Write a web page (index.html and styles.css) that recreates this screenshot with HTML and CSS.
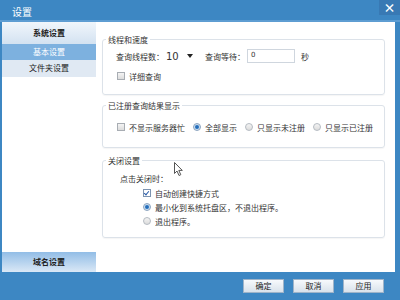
FILE: index.html
```html
<!DOCTYPE html>
<html lang="zh">
<head>
    <meta charset="UTF-8">
    <title>设置</title>
    <link rel="stylesheet" href="styles.css">
</head>
<body>
    <div class="window">
        <div class="titlebar">
            <span class="title">设置</span>
            <span class="close">×</span>
        </div>

        <div class="main">
            <div class="sidebar">
                <div class="side-head">系统设置</div>
                <div class="side-item active">基本设置</div>
                <div class="side-item">文件夹设置</div>
                <div class="side-space"></div>
                <div class="side-foot">域名设置</div>
            </div>

            <div class="content">
                <fieldset class="group group-speed">
                    <legend>线程和速度</legend>
                    <div class="group-body">
                        <div class="row">
                            <span>查询线程数：</span>
                            <span class="select">10<span class="arrow"></span></span>
                            <span class="label-wait">查询等待：</span>
                            <span class="input">0</span>
                            <span class="unit">秒</span>
                        </div>
                        <div class="row row-gap">
                            <span class="check"></span>详细查询
                        </div>
                    </div>
                </fieldset>

                <fieldset class="group group-show">
                    <legend>已注册查询结果显示</legend>
                    <div class="group-body">
                        <div class="row">
                            <span class="opt"><span class="check"></span>不显示服务器忙</span>
                            <span class="opt"><span class="radio on"></span>全部显示</span>
                            <span class="opt"><span class="radio"></span>只显示未注册</span>
                            <span class="opt"><span class="radio"></span>只显示已注册</span>
                        </div>
                    </div>
                </fieldset>

                <fieldset class="group group-close">
                    <legend>关闭设置</legend>
                    <div class="group-body">
                        <div class="row">点击关闭时：</div>
                        <div class="row sub"><span class="check on"></span>自动创建快捷方式</div>
                        <div class="row sub"><span class="radio on"></span>最小化到系统托盘区，不退出程序。</div>
                        <div class="row sub"><span class="radio"></span>退出程序。</div>
                    </div>
                </fieldset>

                <svg class="cursor" width="10" height="15" viewBox="0 0 10 15">
                    <path d="M0.5 0.5 L0.5 11.5 L3 9 L5 13.5 L6.8 12.7 L4.8 8.4 L8.3 8.4 Z" fill="#fff" stroke="#555" stroke-width="1"/>
                </svg>
            </div>
        </div>

        <div class="footer">
            <button class="btn">确定</button>
            <button class="btn">取消</button>
            <button class="btn">应用</button>
        </div>
    </div>
</body>
</html>
```

FILE: styles.css
```css
body {
    margin: 0;
    font-family: "Noto Sans CJK SC", "DejaVu Sans", sans-serif;
    font-size: 8px;
    color: #333;
}
.window {
    width: 400px;
    height: 300px;
    display: flex;
    flex-direction: column;
    background: #3d87c3;
}
.titlebar {
    height: 20px;
    display: flex;
    justify-content: space-between;
    border-bottom: 2px solid #5e9dd2;
}
.title {
    padding: 6px 0 0 12px;
    font-size: 10px;
    line-height: 12px;
    color: #fff;
}
.close {
    width: 21px;
    height: 15px;
    background: #3879b4;
    color: #fff;
    font-size: 12px;
    font-weight: bold;
    line-height: 15px;
    text-align: center;
}
.main {
    height: 250px;
    display: flex;
    margin: 0 5px 0 2px;
}
.sidebar {
    width: 94px;
    display: flex;
    flex-direction: column;
    background: #fff;
    text-align: center;
    line-height: 16px;
}
.side-head {
    height: 22px;
    line-height: 22px;
    font-weight: bold;
    color: #222;
    background: linear-gradient(#f1f6fb, #d3e2f1);
}
.side-item {
    height: 16px;
    color: #222;
    background: #e0e9f3;
}
.side-item + .side-item {
    height: 17px;
}
.side-item.active {
    background: #7db1df;
    color: #fff;
}
.side-space {
    flex: 1;
}
.side-foot {
    height: 20px;
    line-height: 20px;
    font-weight: bold;
    color: #222;
    background: linear-gradient(#92bde6, #dae8f6);
}
.content {
    position: relative;
    flex: 1;
    background: #fff;
    padding: 0 10px 0 6px;
}
.group {
    margin: 5px 0 0;
    padding: 0;
    border: 1px solid #dce2e9;
    border-radius: 3px;
    box-shadow: 0 1px 1px rgba(0,0,0,0.04);
}
.group legend {
    margin-left: 3px;
    padding: 0 2px;
    line-height: 11px;
    color: #333;
}
.group-body {
    padding: 1px 10px 8px 13px;
}
.group-speed {
    margin-top: 12px;
}
.group-speed .group-body {
    padding-top: 4px;
    padding-bottom: 11px;
}
.group-show .group-body {
    padding-top: 9px;
    padding-bottom: 13px;
}
.group-close {
    margin-top: 7px;
}
.group-close .group-body {
    padding: 5px 10px 9px 17px;
}
.row {
    height: 14px;
    display: flex;
    align-items: center;
    white-space: nowrap;
}
.row-gap {
    margin-top: 6px;
}
.group-close .row:first-child {
    margin-bottom: 1px;
}
.row.sub {
    padding-left: 22px;
}
.select {
    display: flex;
    align-items: center;
    width: 30px;
    height: 16px;
    padding-left: 2px;
    font-family: "DejaVu Sans", sans-serif;
    font-size: 10px;
    color: #333;
}
.arrow {
    margin-left: auto;
    margin-right: 3px;
    border-left: 3px solid transparent;
    border-right: 3px solid transparent;
    border-top: 4px solid #222;
}
.label-wait {
    margin-left: 9px;
}
.input {
    width: 43px;
    height: 12px;
    margin-left: 2px;
    padding-left: 3px;
    border: 1px solid #cfd6de;
    font-family: "DejaVu Sans", sans-serif;
    font-size: 7px;
    line-height: 11px;
}
.unit {
    margin-left: 6px;
}
.check, .radio {
    width: 6px;
    height: 6px;
    margin: 0 4px 0 1px;
    border: 1px solid #a8adb3;
    background: linear-gradient(#f4f4f4, #dcdcdc);
    flex: none;
}
.check.on {
    position: relative;
    border-color: #7d94b0;
    background: #fff;
}
.check.on::after {
    content: "";
    position: absolute;
    left: 1px;
    top: 0;
    width: 2px;
    height: 4px;
    border: solid #2a5caa;
    border-width: 0 1px 1px 0;
    transform: rotate(40deg);
}
.radio {
    border-radius: 50%;
    border-color: #b5bbc2;
}
.radio.on {
    background: radial-gradient(circle, #1d5fa8 0, #2f79c4 1.5px, #cfe0f0 2.5px);
    border-color: #8aa3bf;
}
.opt {
    display: flex;
    align-items: center;
}
.opt + .opt {
    margin-left: 7px;
}
.cursor {
    position: absolute;
    left: 78px;
    top: 140px;
}
.footer {
    flex: 1;
    display: flex;
    justify-content: flex-end;
    align-items: flex-start;
    padding: 7px 16px 0 0;
}
.btn {
    width: 41px;
    height: 14px;
    margin-left: 9px;
    padding: 0;
    border: 1px solid #9fb4c9;
    background: linear-gradient(#f7f9fc, #d9e2eb);
    font-family: "Noto Sans CJK SC", sans-serif;
    font-size: 8px;
    color: #222;
    line-height: 12px;
}
```
